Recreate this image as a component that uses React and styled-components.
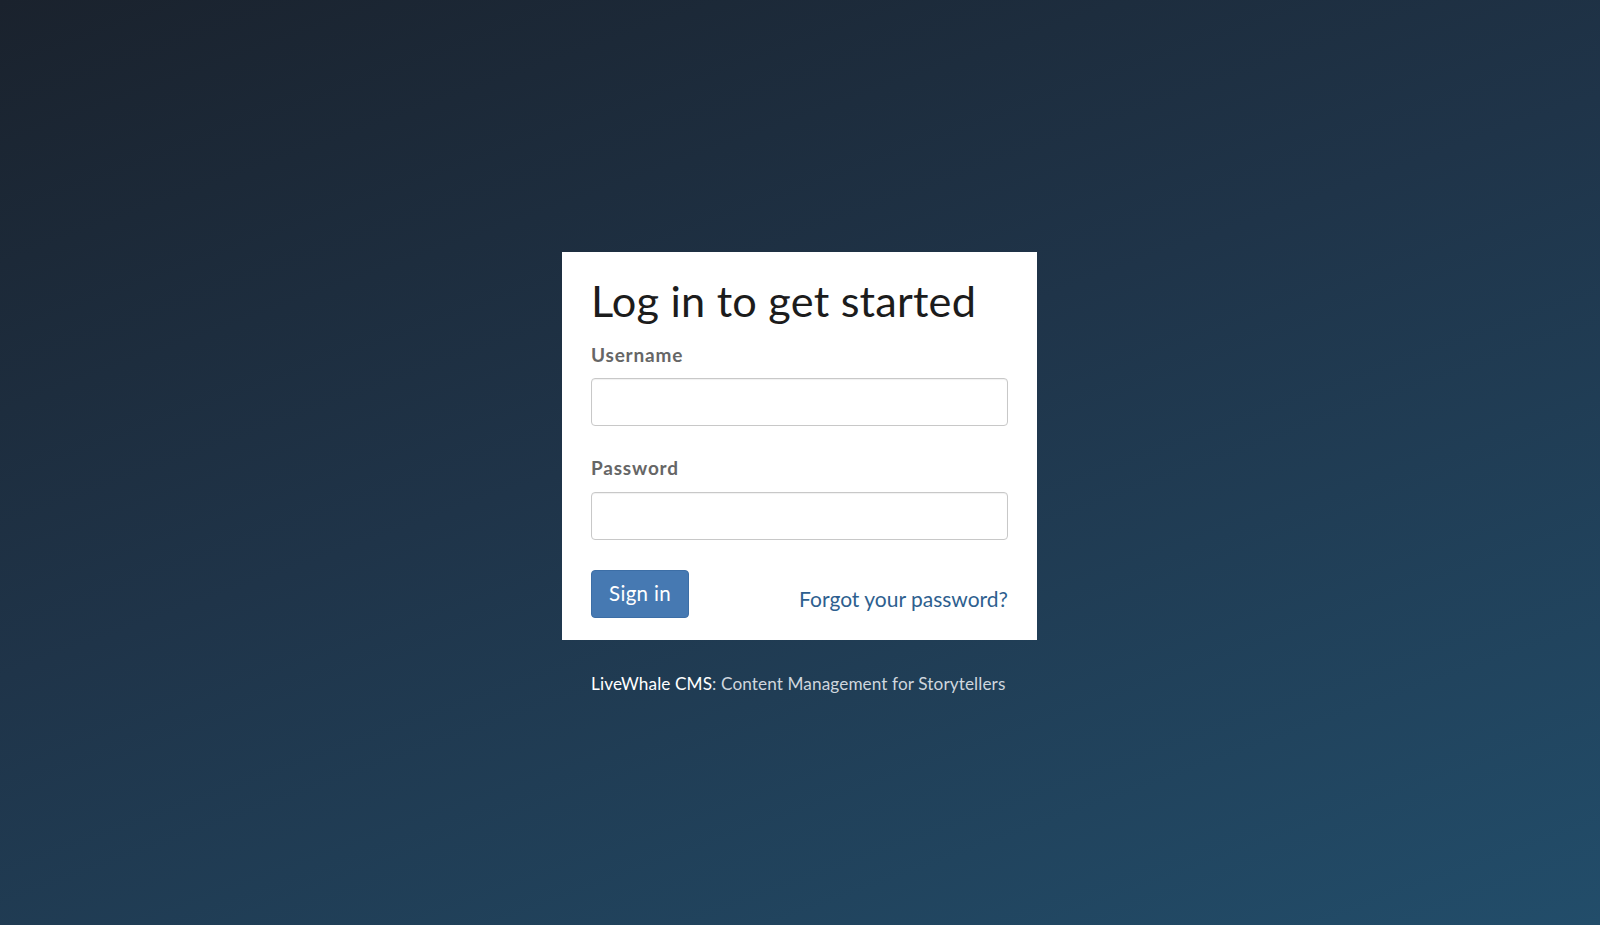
import React from 'react';
import styled, { createGlobalStyle } from 'styled-components';

const GlobalStyle = createGlobalStyle`
  html, body {
    margin: 0;
    padding: 0;
    height: 100%;
  }
  body {
    font-family: Lato, "Open Sans", "Liberation Sans", sans-serif;
    background: linear-gradient(160deg, #1a222d 0%, #1f3449 45%, #224d6a 100%);
    background-attachment: fixed;
  }
`;

const StyledPage = styled.div`
  min-height: 925px;
  display: flex;
  flex-direction: column;
  align-items: center;
  padding: 252px 1px 0 0;
  box-sizing: border-box;
`;

const StyledCard = styled.form`
  width: 475px;
  box-sizing: border-box;
  background: #fff;
  padding: 25px 29px 22px;
`;

const StyledTitle = styled.h1`
  margin: 0;
  font-size: 43.3px;
  line-height: 1.1;
  font-weight: 400;
  color: #1c1c1c;
  letter-spacing: 0.2px;
`;

const StyledLabel = styled.label`
  display: block;
  margin-top: ${ props => props.first ? '18px' : '30px' };
  font-size: 19px;
  line-height: 1.3;
  font-weight: 700;
  letter-spacing: 0.8px;
  color: #666;
`;

const StyledInput = styled.input`
  display: block;
  width: 100%;
  box-sizing: border-box;
  height: 48px;
  margin-top: 11px;
  border: 1px solid #c8c8c8;
  border-radius: 4px;
  box-shadow: inset 0 1px 1px rgba(0, 0, 0, 0.06);
  padding: 0 12px;
  font: inherit;
  font-size: 18px;
  outline: none;
`;

const StyledActions = styled.div`
  display: flex;
  justify-content: space-between;
  align-items: center;
  margin-top: 30px;
`;

const StyledButton = styled.button`
  width: 98px;
  height: 48px;
  border: 1px solid #3c6ea6;
  border-radius: 4px;
  background: #4679b2;
  color: #fff;
  font-family: inherit;
  font-size: 20.5px;
  letter-spacing: 0.3px;
  cursor: pointer;
  padding: 0 0 3px;
`;

const StyledLink = styled.a`
  color: #2e5f8f;
  font-size: 21px;
  text-decoration: none;
  margin-top: 8px;
`;

const StyledFooter = styled.p`
  width: 417px;
  margin: 33px 0 0;
  font-size: 17.2px;
  line-height: 1.3;
  letter-spacing: 0.1px;
  color: #cfd6de;

  strong {
    font-weight: 400;
    color: #fff;
  }
`;

const App = () => (
  <>
    <GlobalStyle />
    <StyledPage>
      <StyledCard onSubmit={ e => e.preventDefault() }>
        <StyledTitle>Log in to get started</StyledTitle>
        <StyledLabel first htmlFor="username">Username</StyledLabel>
        <StyledInput id="username" type="text" />
        <StyledLabel htmlFor="password">Password</StyledLabel>
        <StyledInput id="password" type="password" />
        <StyledActions>
          <StyledButton type="submit">Sign in</StyledButton>
          <StyledLink href="#">Forgot your password?</StyledLink>
        </StyledActions>
      </StyledCard>
      <StyledFooter>
        <strong>LiveWhale CMS</strong>: Content Management for Storytellers
      </StyledFooter>
    </StyledPage>
  </>
);

export default App;
